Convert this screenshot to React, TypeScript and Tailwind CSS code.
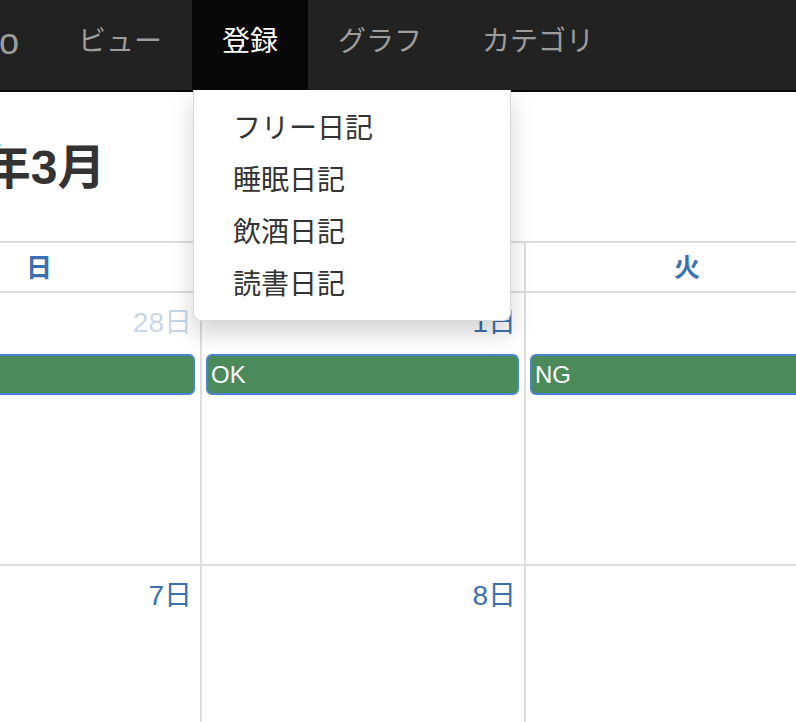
const font = "font-['Liberation_Sans','Noto_Sans_CJK_JP',sans-serif]";

const navItems = [
  { label: 'ビュー', active: false },
  { label: '登録', active: true },
  { label: 'グラフ', active: false },
  { label: 'カテゴリ', active: false },
];

const menuItems = ['フリー日記', '睡眠日記', '飲酒日記', '読書日記'];

const weekdays = ['日', '月', '火', '水', '木', '金', '土'];

const weeks = [
  [
    { day: '28日', other: true, event: '' },
    { day: '1日', other: false, event: 'OK' },
    { day: '', other: false, event: 'NG' },
    { day: '3日', other: false, event: '' },
    { day: '4日', other: false, event: '' },
    { day: '5日', other: false, event: '' },
    { day: '6日', other: false, event: '' },
  ],
  [
    { day: '7日', other: false, event: '' },
    { day: '8日', other: false, event: '' },
    { day: '', other: false, event: '' },
    { day: '10日', other: false, event: '' },
    { day: '11日', other: false, event: '' },
    { day: '12日', other: false, event: '' },
    { day: '13日', other: false, event: '' },
  ],
];

export default function App() {
  return (
    <div className={`w-[796px] h-[722px] overflow-hidden bg-white text-[#333] ${font}`}>
      {/* Navbar */}
      <nav className="relative h-[92px] bg-[#222] border-b-2 border-[#080808] flex">
        <div className="h-[90px] shrink-0 flex items-start pt-[24px] -ml-[81px] pr-[29px] text-[36px] leading-[36px] text-[#9d9d9d]">
          Memo
        </div>
        {navItems.map((item) => (
          <div
            key={item.label}
            className={`relative h-[90px] px-[30px] shrink-0 flex items-start pt-[28px] text-[28px] leading-[28px] ${
              item.active ? 'bg-[#080808] text-white' : 'text-[#9d9d9d]'
            }`}
          >
            {item.label}
            {item.active && (
              <div className="absolute left-[1px] top-[90px] z-10 w-[318px] bg-white border border-black/15 border-t-0 rounded-b-[8px] shadow-[0_12px_24px_rgba(0,0,0,0.18)] pt-[13px] pb-[9px]">
                {menuItems.map((m) => (
                  <div key={m} className="h-[52px] pl-[39px] flex items-center text-[28px] text-[#333]">
                    {m}
                  </div>
                ))}
              </div>
            )}
          </div>
        ))}
      </nav>

      {/* Content */}
      <div className="-ml-[124px]">
        <h1 className="mt-[48px] mb-[45px] text-[48px] leading-[56px] font-bold text-[#333] whitespace-nowrap">
          2019年3月
        </h1>

        <div className="border-t-2 border-[#ddd] w-[2270px]">
          <div className="flex border-b-2 border-[#ddd]">
            {weekdays.map((w) => (
              <div
                key={w}
                className="w-[324px] shrink-0 h-[48px] pt-[3px] border-l-2 border-[#ddd] flex items-center justify-center text-[26px] font-bold text-[#3a70b0]"
              >
                {w}
              </div>
            ))}
          </div>

          {weeks.map((week, wi) => (
            <div key={wi} className="flex border-b-2 border-[#ddd]">
              {week.map((cell, ci) => (
                <div
                  key={ci}
                  className="w-[324px] shrink-0 h-[271px] border-l-2 border-[#ddd] flex flex-col pt-[15px]"
                >
                  <div
                    className={`h-[30px] pr-[8px] text-right text-[28px] leading-[30px] ${
                      cell.other ? 'text-[#3a70b0]/30' : 'text-[#3a70b0]'
                    }`}
                  >
                    {cell.day}
                  </div>
                  {wi === 0 && (ci === 0 || cell.event) && (
                    <div className="mt-[16px] ml-[4px] mr-[5px] h-[41px] rounded-[6px] border-2 border-[#4a86d0] bg-[#4b8a5b] text-white text-[24px] leading-[37px] pl-[3px]">
                      {cell.event}
                    </div>
                  )}
                </div>
              ))}
            </div>
          ))}
        </div>
      </div>
    </div>
  );
}
